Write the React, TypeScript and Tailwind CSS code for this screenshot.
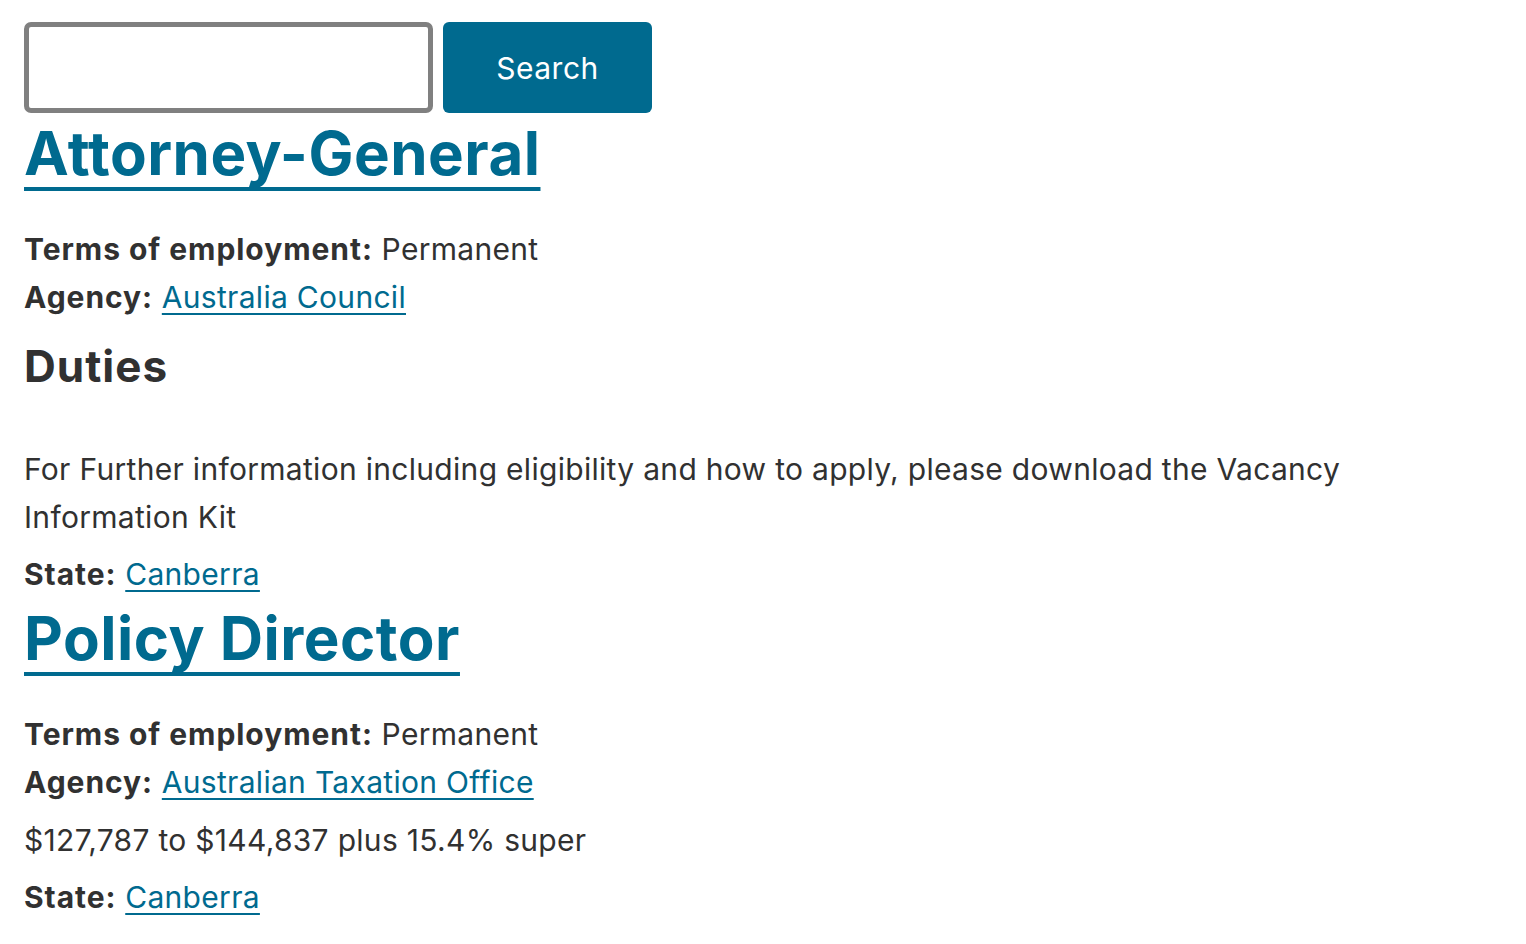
const jobs = [
  {
    title: 'Attorney-General',
    terms: 'Permanent',
    agency: 'Australia Council',
    duties: true,
    text: 'For Further information including eligibility and how to apply, please download the Vacancy Information Kit',
    state: 'Canberra',
  },
  {
    title: 'Policy Director',
    terms: 'Permanent',
    agency: 'Australian Taxation Office',
    duties: false,
    text: '$127,787 to $144,837 plus 15.4% super',
    state: 'Canberra',
  },
];

const link = 'text-[#006a8f] underline decoration-2 underline-offset-[5px] [text-decoration-skip-ink:none]';
const label = 'font-bold tracking-[0.95px]';

export default function App() {
  return (
    <div className="min-h-screen bg-white px-6 pt-[22px] font-['Inter',sans-serif] text-[30px] leading-[48px] tracking-[0.3px] text-[#313131]">
      <form className="flex gap-[10px]" onSubmit={(e) => e.preventDefault()}>
        <input
          type="text"
          className="h-[91px] w-[409px] rounded-[7px] border-[5px] border-[#808080] bg-white px-3 outline-none"
        />
        <button
          type="submit"
          className="h-[91px] w-[209px] rounded-[6px] bg-[#006a8f] text-[30px] tracking-[0.5px] text-white"
        >
          Search
        </button>
      </form>

      {jobs.map((job) => (
        <div key={job.title}>
          <h2 className="mt-[5px] mb-[37px] text-[60px] font-bold leading-[70px] tracking-[0.5px]">
            <a
              href="#"
              className="text-[#006a8f] underline decoration-[4px] underline-offset-[12px] [text-decoration-skip-ink:none]"
            >
              {job.title}
            </a>
          </h2>
          <p>
            <b className={label}>Terms of employment:</b> {job.terms}
          </p>
          <p>
            <b className={label}>Agency:</b>{' '}
            <a href="#" className={link}>
              {job.agency}
            </a>
          </p>
          {job.duties ? (
            <>
              <h3 className="mt-[21px] text-[44px] font-bold leading-[48px] tracking-[1px]">Duties</h3>
              <p className="mt-[55px]">{job.text}</p>
            </>
          ) : (
            <p className="mt-[10px]">{job.text}</p>
          )}
          <p className="mt-[9px]">
            <b className={label}>State:</b>{' '}
            <a href="#" className={link}>
              {job.state}
            </a>
          </p>
        </div>
      ))}
    </div>
  );
}
